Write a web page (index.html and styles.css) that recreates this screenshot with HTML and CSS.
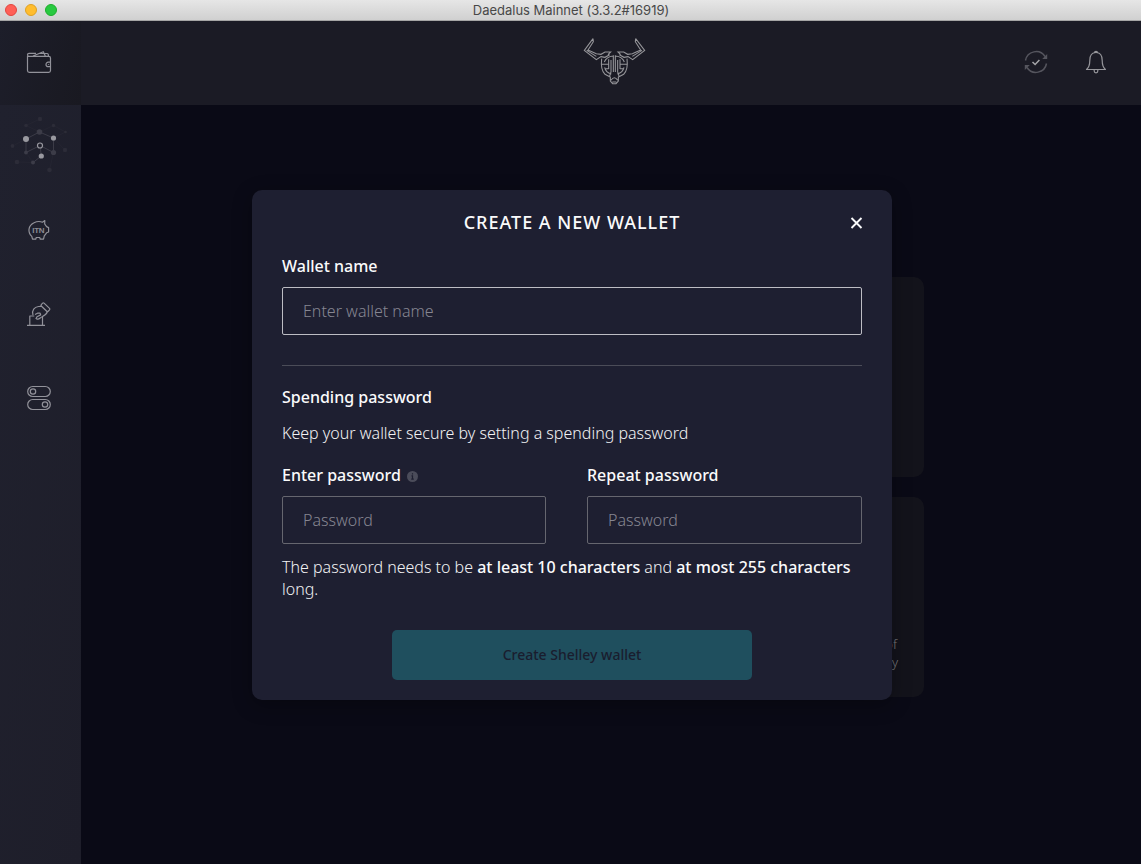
FILE: index.html
```html
<!DOCTYPE html>
<html lang="en">
<head>
<meta charset="utf-8">
<title>Daedalus Mainnet</title>
<link rel="stylesheet" href="styles.css">
</head>
<body>
<div class="window">
  <div class="titlebar">
    <div class="lights"><i class="light red"></i><i class="light amber"></i><i class="light green"></i></div>
    <span class="titlebar-text">Daedalus Mainnet (3.3.2#16919)</span>
  </div>
  <header class="topbar">
    <div class="topbar-wallet">
      <svg class="icon-cell" viewBox="0 21 81 84"><path d="M27.500 56v14.500q0 1.800 1.800 1.800h19.400q1.800 0 1.800-1.800V58q0-1.700-1.800-1.700H29q-1.500 0-1.500-1.600 0-1.400 1.500-1.400h7M33 56l10.300-4.300 2 4.300M39 53.500h8q1.500 0 1.500 2.500M50.500 62.200h-2.300a2.200 2.200 0 0 0 0 4.400h2.300M48.500 64v.8"/></svg>
    </div>
    <svg class="logo" viewBox="0 0 240 195">
      <path d="M54 26L28 61l36 28 14-9 12 2 14-8M54 26l1 9-16 25 25 11 14 2 12-7h17l-8 8M35 61l29 18"/>
      <path d="M182 26l27 35-36 28-14-9-12 2-14-8M182 26l-1 9 16 25-25 11-14 2-12-7h-17l8 8M201 61l-29 18"/>
      <path d="M80 86q-4 34 10 47l17 9M156 86q4 34-10 47l-17 9M88 96q6-16 26-18M148 96q-6-16-26-18M115 76v50M121 76v50M80 103h21M156 103h-21M89 112q3 15 20 20M147 112q-3 15-20 20M101 88v29M135 88v29M108 90v36l-4 12M128 90v36l4 12M92 116h9M144 116h-9M106 142v11l7 8h10l7-8v-11M108 151q10-16 20 0M112 156h12"/>
    </svg>
    <div class="topbar-actions">
      <svg class="icon-sync" viewBox="1024 50 24 24"><path class="dim" d="M1025.500 60.500A10.700 10.700 0 0 1 1045 56.500M1046.500 63.500A10.700 10.700 0 0 1 1027 67.500"/><path class="dim-fill" d="M1047.200 54v5h-5zM1024.800 70v-5h5z"/><path class="check" d="M1032.500 62l2.600 2.500 4.300-4.600"/></svg>
      <svg class="icon-bell" viewBox="1084 50 24 24"><path d="M1086.500 69.500c2.500-2 3.300-5 3.300-9 0-4.500 2-8 6.200-8s6.200 3.500 6.200 8c0 4 .8 7 3.300 9zM1094.500 52.500a1.500 1.200 0 0 1 3 0M1094.200 69.700v1.300a1.800 1.800 0 0 0 3.600 0v-1.300"/></svg>
    </div>
  </header>
  <div class="body">
    <nav class="sidebar">
      <svg class="icon-cell network" viewBox="0 0 81 84">
        <path class="link-faint" d="M40 14l-14 6.500L39.500 27l14-6.500 12 6.500-12 6L65 45M12.500 41L26 34M26 47.500l7 10-16-.5M53.500 47.500l-4 17.500"/>
        <path class="link" d="M26 47.500V34l13.500-7 14 6v14.500l-13.500-7-14 7M40 40.500l1.300 10.500-8.300 6.500"/>
        <g class="faint"><circle cx="40" cy="14" r="2.200"/><circle cx="26" cy="20.500" r="1.800"/><circle cx="53.500" cy="20.500" r="1.700"/><circle cx="65.500" cy="27" r="1.300"/><circle cx="12.500" cy="41" r="1.900"/><circle cx="65" cy="45" r="2.200"/><circle cx="17" cy="57" r="2.300"/><circle cx="49.500" cy="65" r="2.300"/></g>
        <g class="mid"><circle cx="39.500" cy="27" r="2.800"/><circle cx="26" cy="47.500" r="1.900"/><circle cx="53.500" cy="47.500" r="2.600"/><circle cx="33" cy="57.500" r="2"/></g>
        <g class="bright"><circle cx="26" cy="34" r="3"/><circle cx="53.500" cy="33" r="2.600"/><circle cx="41.300" cy="51" r="2.600"/></g>
        <circle class="ring" cx="40" cy="40.500" r="2.500"/>
      </svg>
      <svg class="icon-cell" viewBox="0 189 81 84"><path d="M34 222.800c3-1.600 6-1.600 8.500-.6l2.300-1.600-.1 3.400 1.900 2.600 2 1v4.400l-2 .8-2.300 3-.8 3.400h-3.200l-.6-1.700h-3.400l-.6 1.700h-3.200l-.7-2.800c-4.200-3.800-4-10.600 2.200-13.600z"/><text class="itn" x="38.300" y="233">ITN</text></svg>
      <svg class="icon-cell" viewBox="0 273 81 84"><path d="M27 325.300h18M29.800 325v-9h4.500M42.500 325v-8.300M33 315c-1.500-5 1.500-8 5.500-8.500l3.300-.2M36.500 319.200h1.200c2 0 2.500-1.700 4-2.200 2-1 4.700-2.500 5.600-5M35 314.500l2.500-1.300h2.600l.6 1.700-3.700 1.800-1.200 2.300"/><rect x="-4.800" y="-2" width="9.600" height="4" rx="1" transform="translate(45.400 307.200) rotate(44)"/></svg>
      <svg class="icon-cell" viewBox="0 357 81 84"><rect x="27.700" y="386.500" width="22.600" height="10" rx="5"/><circle cx="33" cy="391.500" r="2.700"/><rect x="27.700" y="399.500" width="22.600" height="10" rx="5"/><circle cx="45" cy="404.500" r="2.700"/></svg>
    </nav>
    <main class="content">
      <div class="cards">
        <div class="card"></div><div class="card"></div><div class="card"></div>
        <div class="card card-text"><span class="line-a">of</span><span>y</span></div>
      </div>
    </main>
  </div>
  <section class="dialog">
    <div class="dialog-head">
      <h1 class="dialog-title">CREATE A NEW WALLET</h1>
      <svg class="close" viewBox="0 0 13 13"><path d="M1.500 1l10 10M11.500 1l-10 10"/></svg>
    </div>
    <label class="label">Wallet name</label>
    <div class="input input-active">Enter wallet name</div>
    <hr class="divider">
    <div class="label">Spending password</div>
    <p class="hint">Keep your wallet secure by setting a spending password</p>
    <div class="passwords">
      <div class="field-left">
        <label class="label">Enter password<svg class="info" viewBox="0 0 11 11"><circle cx="5.500" cy="5.500" r="5.500"/><path d="M5.500 2.200v1.400M4.500 4.800h1v3.400M4.200 8.200h2.600"/></svg></label>
        <div class="input">Password</div>
      </div>
      <div class="field-right">
        <label class="label">Repeat password</label>
        <div class="input">Password</div>
      </div>
    </div>
    <p class="rules">The password needs to be <b>at least 10 characters</b> and <b>at most 255 characters</b> long.</p>
    <div class="submit">Create Shelley wallet</div>
  </section>
</div>
</body>
</html>
```
FILE: styles.css
```css
* { box-sizing: border-box; }
body { margin: 0; font-family: "Noto Sans", "Open Sans", sans-serif; background: #0a0a16; }
.window { position: relative; display: flex; flex-direction: column; width: 1141px; height: 864px; overflow: hidden; }

.titlebar { position: relative; height: 21px; flex: none; display: flex; align-items: center; justify-content: center; background: linear-gradient(#e6e6e6, #d0d0d0); border-bottom: 1px solid #a5a5a5; }
.lights { position: absolute; left: 5px; top: 4px; display: flex; gap: 8px; }
.light { width: 12px; height: 12px; border-radius: 50%; border: 1px solid; }
.red { background: #ff5f57; border-color: #e14640; }
.amber { background: #ffbd2e; border-color: #dfa123; }
.green { background: #28c940; border-color: #1dad2b; }
.titlebar-text { padding-left: 1px; font: 13px/20px Inter, "Liberation Sans", sans-serif; letter-spacing: -.02px; color: #484848; white-space: nowrap; }

.topbar { height: 84px; flex: none; display: flex; justify-content: space-between; background: #1b1b25; }
.topbar-wallet { width: 81px; background: linear-gradient(105deg, #1d1e2a, #191921); }
.icon-cell { display: block; width: 81px; height: 84px; flex: none; fill: none; stroke: #92929a; stroke-width: 1.200; stroke-linejoin: round; }
.logo { width: 80px; height: 65px; margin: 9px 0 0 124px; fill: none; stroke: #96969a; stroke-width: 3.200; }
.topbar-actions { display: flex; gap: 36px; padding: 29px 33px 0 0; }
.icon-sync, .icon-bell { width: 24px; height: 24px; fill: none; }
.icon-bell { stroke: #97979c; stroke-width: 1.200; stroke-linejoin: round; }
.dim { stroke: #55555e; stroke-width: 1.500; }
.dim-fill { fill: #55555e; }
.check { stroke: #a5a5a9; stroke-width: 1.500; }

.body { flex: 1; display: flex; }
.sidebar { width: 81px; background: linear-gradient(100deg, #20212e, #1e1e2a); }
.network { stroke: none; }
.link { fill: none; stroke: #3b3b47; stroke-width: 1; }
.link-faint { fill: none; stroke: #262632; stroke-width: .8; }
.faint { fill: #2c2c38; }
.mid { fill: #3c3c48; }
.bright { fill: #9999a0; }
.ring { fill: #1e1e2a; stroke: #9999a0; stroke-width: 1.200; }
.itn { font: 700 8px "Liberation Sans", sans-serif; letter-spacing: -.3px; fill: #8c8c93; stroke: none; text-anchor: middle; }

.content { flex: 1; padding: 172px 217px 0; }
.cards { display: grid; grid-template-columns: 1fr 1fr; grid-auto-rows: 200px; gap: 20px; }
.card { border-radius: 10px; background: #13131b; }
.card-text { display: flex; flex-direction: column; align-items: flex-end; padding: 138px 26px 0 0; font-size: 13px; line-height: 18px; font-weight: 300; color: #7c7c80; }
.line-a { margin-right: 1px; }

.dialog { position: absolute; left: 252px; top: 190px; width: 640px; height: 510px; padding: 20px 30px; border-radius: 10px; background: #1e1f31; box-shadow: 0 5px 20px rgba(0,0,0,.3); color: #fafafb; display: flex; flex-direction: column; }
.dialog-head { position: relative; height: 25px; flex: none; display: flex; justify-content: center; }
.dialog-title { margin: 0; font-size: 18px; line-height: 25px; font-weight: 500; letter-spacing: 1px; }
.close { position: absolute; right: -1px; top: 6px; width: 13px; height: 13px; margin-top: .5px; fill: none; stroke: #fafafb; stroke-width: 1.900; }
.label { display: flex; align-items: center; height: 22px; font-size: 16px; line-height: 22px; font-weight: 500; }
.dialog-head + .label { margin-top: 20px; }
.input { height: 48px; margin-top: 10px; padding: 0 20px; border: 1px solid #66666f; border-radius: 2px; font-size: 16px; line-height: 46px; font-weight: 300; color: #868691; flex: none; }
.input-active { border-color: #bdbdc4; }
.divider { width: 100%; height: 1px; flex: none; margin: 30px 0 20px; border: 0; background: #4b4c58; }
.hint { margin: 14px 0 20px; font-size: 16px; line-height: 22px; font-weight: 300; color: #f2f2f4; }
.passwords { display: flex; justify-content: space-between; }
.field-left { width: 264px; }
.field-right { width: 275px; }
.info { width: 11px; height: 11px; margin: 3px 0 0 6px; fill: #4b4c5a; stroke: #1e1f31; stroke-width: 1.200; }
.info circle { stroke: none; }
.rules { margin: 12px 0 30px; font-size: 16px; line-height: 22px; font-weight: 300; color: #f2f2f4; }
.rules b { font-weight: 500; color: #fafafb; }
.submit { width: 360px; height: 50px; margin: 0 auto; border-radius: 5px; background: #1f4f5e; color: #1a1d2e; text-align: center; font-size: 14px; line-height: 50px; font-weight: 500; }
```
